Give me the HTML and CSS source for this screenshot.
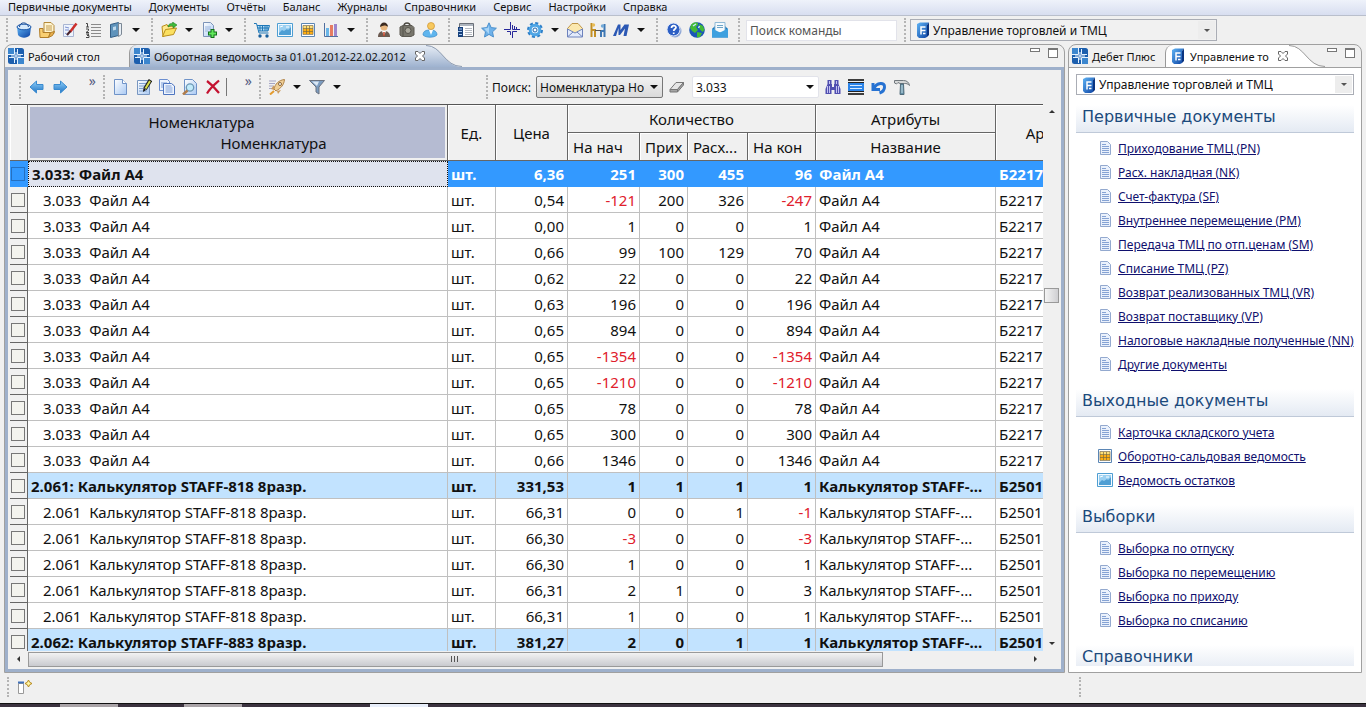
FILE: index.html
```html
<!DOCTYPE html>
<html lang="ru">
  <head>
    <meta charset="utf-8" />
    <meta name="viewport" content="width=device-width, initial-scale=1.0" />
    <title>Дебет Плюс</title>
    <link rel="stylesheet" href="styles.css" />
  </head>

  <body>
    <svg class="sprite" width="0" height="0">
      <defs>
        <linearGradient id="blue" x1="0" y1="0" x2="1" y2="1">
          <stop offset="0" stop-color="#5fb4f5" />
          <stop offset="1" stop-color="#0a3fa0" />
        </linearGradient>
        <linearGradient id="sky" x1="0" y1="0" x2="0" y2="1">
          <stop offset="0" stop-color="#8fd0fa" />
          <stop offset="1" stop-color="#1f74c4" />
        </linearGradient>
        <linearGradient id="page" x1="0" y1="0" x2="1" y2="1">
          <stop offset="0" stop-color="#ffffff" />
          <stop offset="1" stop-color="#a9c9f3" />
        </linearGradient>
        <linearGradient id="tabfill" x1="0" y1="0" x2="0" y2="1">
          <stop offset="0" stop-color="#e8eef6" />
          <stop offset="1" stop-color="#9eb2cf" />
        </linearGradient>
      </defs>
      <symbol id="i-box" viewBox="0 0 16 16">
        <path d="M1 5l1 8c3 3.500 9 3.500 12 0l1-8z" fill="url(#blue)" />
        <ellipse cx="8" cy="5" rx="7" ry="2.800" fill="#d5e8fa" stroke="#1c57a8" />
        <path d="M3.500 5c0-5.500 8-5.500 9 0" fill="none" stroke="#174a96" />
      </symbol>
      <symbol id="i-docs" viewBox="0 0 16 16">
        <path d="M5 .5h7l3 3v8H5z" fill="#fff4cf" stroke="#b58a3a" />
        <path d="M7 4h6M7 6h6M7 8h6" stroke="#c39c50" />
        <path d="M.5 6.500H4v4h7.500l-2 5H1z" fill="#f9cf72" stroke="#b07d28" />
        <path d="M11.500 10.500l4-1-2 4-4 2z" fill="#e7ae4c" stroke="#b07d28" />
      </symbol>
      <symbol id="i-pen" viewBox="0 0 16 16">
        <path d="M1.500 2.500h10v12h-10z" fill="#eef4fd" stroke="#a9b5d2" />
        <path d="M3 5l4 1M3 8h4M3 11l3 2" stroke="#7b8fd0" />
        <path d="M14.500 1.500L8 10" stroke="#cc2f2b" stroke-width="2.500" />
        <path d="M8.500 9L5 13" stroke="#48242c" stroke-width="2" />
      </symbol>
      <symbol id="i-list" viewBox="0 0 16 16">
        <path d="M6 2.500h10M6 5.500h10M6 8.500h10M6 11.500h10M6 14.500h10" stroke="#8a8a8a" />
        <path d="M1 1.500h1.500V5M1 5h3M1 7h2.500v1.500L1 10.500h3M1 12h3L2 13.500h2V15.500H1" fill="none" stroke="#444" />
      </symbol>
      <symbol id="i-book" viewBox="0 0 16 16">
        <path d="M2.500 2.500l8-2v13l-8 2z" fill="#5f93bb" stroke="#355f86" />
        <path d="M10.500 1.500h3v11l-3 2z" fill="#e7eef5" stroke="#7b8794" />
        <path d="M5 5l3-.7v3.500l-3 .7z" fill="#bed9ec" />
      </symbol>
      <symbol id="i-folder" viewBox="0 0 16 16">
        <path d="M1 4.500l5-2 1 2 6-.5v4L2 14.500z" fill="#ffe98d" stroke="#b98e1b" />
        <path d="M1.500 14.500l3-7 11-1.500-3 6.500z" fill="#fbe060" stroke="#b98e1b" />
        <path d="M7 5c0-3 3-4 5-3.500L11.500 0 16 3l-4 3V4c-2-.5-3 0-5 1z" fill="#3ebb3a" stroke="#1f8423" stroke-width=".6" />
      </symbol>
      <symbol id="i-docplus" viewBox="0 0 16 16">
        <path d="M2.500.5h7l3 3v11h-10z" fill="url(#page)" stroke="#7c93b8" />
        <path d="M4 5h6M4 7h6M4 9h3" stroke="#9db5dc" />
        <path d="M11.500 7v9M7 11.500h9" stroke="#127018" stroke-width="4" />
        <path d="M11.500 8v7M8 11.500h7" stroke="#62e85c" stroke-width="2" />
      </symbol>
      <symbol id="i-cart" viewBox="0 0 16 16">
        <path d="M3 3h12.500L14 9H4.500z" fill="#b5dcf5" />
        <path d="M0 1.500h2.500L5 11h9.500M3 3.500h12.500L14 9H4.500M6 3.500V9M8.500 3.500V9M11 3.500V9M13 3.500V9M3.500 6H15" fill="none" stroke="#1f78b8" />
        <circle cx="6" cy="14" r="1.700" fill="#185f9c" />
        <circle cx="13" cy="14" r="1.700" fill="#185f9c" />
      </symbol>
      <symbol id="i-image" viewBox="0 0 16 16">
        <path d="M.5 1.500h15v13H.5z" fill="#f3faff" stroke="#4e9ed2" />
        <path d="M2 3h12v10H2z" fill="#9bd0f1" />
        <path d="M2 11l3-3 2 1 3-2 1 1 3-3v8H2z" fill="#4f9fd4" />
        <path d="M3 5l3-1M9 5h3" stroke="#fff" />
      </symbol>
      <symbol id="i-grid" viewBox="0 0 16 16">
        <path d="M1.500 1.500h13v13h-13z" fill="#fff" stroke="#5b86b5" />
        <path d="M3 4h10v3H3z" fill="#ffe07a" />
        <path d="M3 7h10v5H3z" fill="#ffae12" />
        <path d="M3 3.500h10v9H3zM6.500 4v8M9.500 4v8M3 6.500h10M3 9.500h10" fill="none" stroke="#7d6a3c" stroke-width=".7" />
      </symbol>
      <symbol id="i-chart" viewBox="0 0 16 16">
        <path d="M1.500 1v13.500H15" fill="none" stroke="#516f9e" />
        <path d="M3 6h3v8H3z" fill="#6ab6e8" />
        <path d="M7 3h3v11H7z" fill="#e67c62" />
        <path d="M11 2h3v12h-3z" fill="#9d86cc" />
      </symbol>
      <symbol id="i-man" viewBox="0 0 16 16">
        <path d="M2 15c0-5 3-6 6-6s6 1 6 6z" fill="#6b5a50" />
        <circle cx="8" cy="5" r="3.500" fill="#e8b67e" />
        <path d="M4 5c0-6 8-6 8 0-2-2-5-2-8 0z" fill="#3b2a20" />
        <path d="M6 9l2 5 2-5z" fill="#fff" />
        <path d="M8 10v4" stroke="#c23e22" stroke-width="1.500" />
      </symbol>
      <symbol id="i-case" viewBox="0 0 16 16">
        <path d="M5 4c0-4 6-4 6 0" fill="none" stroke="#4c4941" stroke-width="1.500" />
        <path d="M1 5l3-1.500h9l2 2V13l-3 1.500H3L1 13z" fill="#77756b" stroke="#5c5951" />
        <path d="M4 4v10" stroke="#55524a" />
        <circle cx="9" cy="8.500" r="3" fill="#aaa89c" stroke="#55524a" />
      </symbol>
      <symbol id="i-user" viewBox="0 0 16 16">
        <path d="M1 13c0-4 3-5 7-5s7 1 7 5c-3 3-11 3-14 0z" fill="#5fb5ee" stroke="#2b7fc0" stroke-width=".6" />
        <circle cx="9" cy="4" r="3.500" fill="#f7c95e" stroke="#cf922b" stroke-width=".7" />
        <path d="M7 8l2 5 2-5z" fill="#fff" />
      </symbol>
      <symbol id="i-form" viewBox="0 0 16 16">
        <path d="M1.500 1.500h14v13h-14z" fill="#fff" stroke="#6b7078" />
        <path d="M2 2h13v2H2z" fill="#aeb5be" />
        <path d="M7 6.500h7M7 8.500h7M7 10.500h7M7 12.500h7" stroke="#b5bac2" />
        <path d="M0 5h5v10H0z" fill="#16407c" />
        <path d="M1 7h3M0 9.500h4M1 12.500h3" stroke="#a9c9ef" />
      </symbol>
      <symbol id="i-star" viewBox="0 0 16 16">
        <path d="M8 .8l2.200 4.800 5.200.6-3.900 3.600 1 5.200L8 12.400 3.500 15l1-5.200L.6 6.200l5.200-.6z" fill="#6fb2ea" stroke="#4c90cc" />
        <path d="M8 3v9L3 6.500l4-.500z" fill="#a8d5f7" />
      </symbol>
      <symbol id="i-cross" viewBox="0 0 16 16">
        <path d="M6.500 0v7.500H0M8.500 3v4.500M8.500 7.500H16M10.500 4v3.500M6.500 9.500V13M8.500 16V9.500H13M3 9.500h3.500M12.500 5v2.500" fill="none" stroke="#28289a" />
      </symbol>
      <symbol id="i-gear" viewBox="0 0 16 16">
        <circle cx="8" cy="8" r="6.800" fill="none" stroke="#2d7fc9" stroke-width="2.400" stroke-dasharray="3 2.340" />
        <circle cx="8" cy="8" r="4.800" fill="#e8f5ff" stroke="#4ea5e5" stroke-width="3" />
        <circle cx="8" cy="8" r="2" fill="#fff" stroke="#2065ab" />
      </symbol>
      <symbol id="i-mail" viewBox="0 0 16 16">
        <path d="M.5 6.500L5 1.500h6l4.500 5v8H.5z" fill="#fbe8ae" stroke="#bf9545" />
        <path d="M.5 7l7.500 4 7.500-4v8H.5z" fill="#e3ebfb" stroke="#6d82bd" />
        <path d="M1 14.500l5-4.500M15 14.500L10 10" stroke="#6d82bd" />
      </symbol>
      <symbol id="i-doors" viewBox="0 0 16 16">
        <path d="M1.500 1v14M5 7v8M1.500 8H6" fill="none" stroke="#c28f24" stroke-width="2" />
        <circle cx="3.500" cy="3" r="1.700" fill="#e9bd57" />
        <path d="M14.500 2v13M11 8v7M10 9h4" fill="none" stroke="#3f78b4" stroke-width="2" />
        <circle cx="12.500" cy="4" r="1.700" fill="#74abd8" />
        <path d="M5 8.500h6" stroke="#555" />
      </symbol>
      <symbol id="i-m" viewBox="0 0 16 16">
        <path d="M0 14L5 2.500h2.500L7.500 8l4-5.500H16L13.500 14h-3L12 6.500 7 13H5.500V6L3 14z" fill="#2b58b4" />
      </symbol>
      <symbol id="i-help" viewBox="0 0 16 16">
        <circle cx="9" cy="9" r="6.500" fill="#8fa7d5" />
        <circle cx="7.500" cy="7.500" r="6.500" fill="#2d5fc4" stroke="#dbe6fa" />
        <path d="M5.500 6c0-3 4.500-3 4.500-.5C10 7 7.700 7 7.700 9M7.700 10.500V12" fill="none" stroke="#fff" stroke-width="1.700" />
      </symbol>
      <symbol id="i-globe" viewBox="0 0 16 16">
        <circle cx="8" cy="8" r="7.800" fill="#1c56b8" />
        <path d="M2 3c3-4 8-3 7 0L7 5l2 3-3 3-3-2-2-3zM10 2l4 2 1.500 4-2 2-3-3zM8 10l5 1-2 4-3 .5z" fill="#43bb36" />
        <path d="M4 4l3-2M9.500 6l1-2" stroke="#c5e8ff" stroke-width="1.500" />
      </symbol>
      <symbol id="i-letter" viewBox="0 0 16 16">
        <path d="M0 7l4-4h8l4 4v8.500H0z" fill="#1c78bb" />
        <path d="M3 .5h10v10H3z" fill="#f4fafd" stroke="#8fb9d6" />
        <path d="M5 3.500h6M5 5.500h6" stroke="#6fa5c8" />
        <path d="M0 6.500l8 4 8-4v9H0z" fill="#3ea0df" />
      </symbol>
      <symbol id="i-app" viewBox="0 0 16 16">
        <path d="M2 2l3-1.500h9L12 3v12l-2 1H4l-2-2z" fill="url(#blue)" />
        <path d="M12 3l2-2.500V13l-2 2z" fill="#0b3480" />
        <path d="M6 12.500V5h4.500M6 8.500h4.500M8 11.500h2.500" fill="none" stroke="#fff" stroke-width="1.500" />
      </symbol>
      <symbol id="i-logo" viewBox="0 0 16 16">
        <rect width="16" height="16" rx="2.500" fill="#1c5fae" />
        <path d="M0 0h6v6H0zM10 10h6v6h-6z" fill="#3c86ce" />
        <path d="M6.500 0v6.500H0M9.500 1v5.500H15M9.500 16V9.500H16M6.500 15V9.500H1M8 4v8M3 8h10" fill="none" stroke="#e6f3ff" />
      </symbol>
      <symbol id="i-close" viewBox="0 0 12 12">
        <path d="M1.500 1.500h2.500l2 2 2-2h2.500V4L8.500 6l2 2v2.500H8l-2-2-2 2H1.500V8l2-2-2-2z" fill="#fff" stroke="#666" />
      </symbol>
      <symbol id="i-back" viewBox="0 0 16 16">
        <path d="M1 8l6.500-6v3.500H14v5H7.500V14z" fill="url(#sky)" stroke="#3a8bd0" />
      </symbol>
      <symbol id="i-fwd" viewBox="0 0 16 16">
        <path d="M15 8L8.500 2v3.500H2v5h6.500V14z" fill="url(#sky)" stroke="#3a8bd0" />
      </symbol>
      <symbol id="i-new" viewBox="0 0 16 16">
        <path d="M1.500.5h8l4 4v11h-12z" fill="url(#page)" stroke="#6f93c8" />
        <path d="M9.500.5v4h4" fill="#fff" stroke="#6f93c8" />
      </symbol>
      <symbol id="i-edit" viewBox="0 0 16 16">
        <path d="M1.500 1.500h12v14h-12z" fill="url(#page)" stroke="#7896c0" />
        <path d="M3 4.500h7M3 7h6M3 9.500h4M3 12h8" stroke="#7fa1ce" />
        <path d="M14.500 1L9 10" stroke="#1d1d1d" stroke-width="4" />
        <path d="M14 2L9.500 9.500" stroke="#d9e04a" stroke-width="2" />
        <path d="M7.500 9l-.5 4 3-2z" fill="#111" />
      </symbol>
      <symbol id="i-copy" viewBox="0 0 16 16">
        <path d="M.5.5h8l2 2v9H.500z" fill="#eef4fd" stroke="#6c8fd0" />
        <path d="M2 4h6M2 6h3M2 8h3" stroke="#7e9fd8" />
        <path d="M4.500 4.500h8l3 2.500v8.500h-11z" fill="#eef4fd" stroke="#4f76c0" />
        <path d="M6.500 7h6M6.500 9h7M6.500 11h7M6.500 13h7" stroke="#7e9fd8" />
      </symbol>
      <symbol id="i-find" viewBox="0 0 16 16">
        <path d="M2.500.5h8l4 4v11h-12z" fill="url(#page)" stroke="#6f93c8" />
        <circle cx="8" cy="8.500" r="3.700" fill="#c2ebfa" stroke="#6d98b5" stroke-width="1.300" />
        <path d="M5.500 11.500L1 15.500" stroke="#b07d4b" stroke-width="2.500" />
      </symbol>
      <symbol id="i-del" viewBox="0 0 16 16">
        <path d="M2 2c4 3 8 7 12 12M14 1.500C10 5 5 9 2 14.500" fill="none" stroke="#c41230" stroke-width="2.200" />
      </symbol>
      <symbol id="i-rocket" viewBox="0 0 16 16">
        <path d="M0 2h7M0 4.500h6M0 7h4M0 9.500h3" stroke="#a5a5c5" />
        <path d="M5 10c1-5 5-9 10.500-9.500C15 6 12 9 7 12z" fill="#f0cf97" stroke="#b08348" />
        <path d="M5 6L2 10l3 1zM8 12l1 3 3-4z" fill="#cc9a5a" />
        <circle cx="11" cy="5" r="1.500" fill="#fff" stroke="#8a673d" />
        <path d="M5 12l-4 3.500" stroke="#e49b2e" stroke-width="2" />
      </symbol>
      <symbol id="i-filter" viewBox="0 0 16 16">
        <path d="M.5 1.500h15L10 8v7l-3-2V8z" fill="#7b9cc0" stroke="#6b7280" />
        <path d="M3 2.500h7L8 7z" fill="#dbe8f5" />
      </symbol>
      <symbol id="i-eraser" viewBox="0 0 16 16">
        <path d="M1 10.500l6-7h7.500l-6 7z" fill="#e6e6e6" stroke="#777" />
        <path d="M1 10.500V13h7.500v-2.500zM8.500 13l6-7V3.500l-6 7z" fill="#a5a5a5" stroke="#777" />
      </symbol>
      <symbol id="i-binoc" viewBox="0 0 16 16">
        <path d="M2.500 5V1h4v4H7v3h2V5h.5V1h4v4l2 5v5h-6v-4h-3v4h-6v-5z" fill="#514fb0" />
        <path d="M2.500 7v7M4.500 7v7M11.500 7v7M13.500 7v7M4.500 2v3M11.500 2v3" stroke="#c3c3f2" />
      </symbol>
      <symbol id="i-lines" viewBox="0 0 16 16">
        <path d="M0 4h16v8H0z" fill="#2c84e8" />
        <path d="M0 1h16M0 15h16" stroke="#000" stroke-width="1.500" />
        <path d="M0 3.500h16M0 12.500h16" stroke="#222" />
        <path d="M2 6.500h12M2 9.500h12" stroke="#d8ebff" />
      </symbol>
      <symbol id="i-undo" viewBox="0 0 16 16">
        <path d="M2 4v6.500h7M2.500 10C6 3 14 3 13.500 8c0 3-2 5-5 6" fill="none" stroke="#2672d2" stroke-width="3" />
      </symbol>
      <symbol id="i-hammer" viewBox="0 0 16 16">
        <path d="M.5 4V1.500h9c3.500 0 5.500 2 6 5-2-2-3-2-5-2H6L4 3.500 2.500 5z" fill="#d6d8d8" stroke="#70777c" />
        <path d="M6.500 5h3l.5 10.500H6z" fill="#628fa6" stroke="#506c7b" />
        <path d="M8 6v8" stroke="#c7e0ea" />
      </symbol>
      <symbol id="i-doc" viewBox="0 0 16 16">
        <path d="M3.500 1.500h7l3 3v10h-10z" fill="#eaf1fc" stroke="#93a9cf" />
        <path d="M5 4.500h4M5 6.500h7M5 8.500h7M5 10.500h7M5 12.500h7" stroke="#86a3d4" />
      </symbol>
      <symbol id="i-newwin" viewBox="0 0 16 16">
        <path d="M.5 3.500h5v10h-5z" fill="#fff" stroke="#999" />
        <path d="M0 2.500h6" stroke="#3f70ba" stroke-width="2" />
        <path d="M10.500 0l1.200 2.300L14 3.500l-2.300 1.200L10.500 7 9.300 4.700 7 3.500l2.300-1.200z" fill="#fff6a5" stroke="#b68a1e" />
      </symbol>
    </svg>

    <nav class="menubar">
      <button>Первичные документы</button>
      <button>Документы</button>
      <button>Отчёты</button>
      <button>Баланс</button>
      <button>Журналы</button>
      <button>Справочники</button>
      <button>Сервис</button>
      <button>Настройки</button>
      <button>Справка</button>
    </nav>

    <header class="toolbar">
      <div class="group" data-icons="box docs pen list book |"></div>
      <div class="group" data-icons="folder | docplus |"></div>
      <div class="group" data-icons="cart image grid chart |"></div>
      <div class="group" data-icons="man case user"></div>
      <div class="group" data-icons="form star cross gear | mail doors m |"></div>
      <div class="group" data-icons="help globe letter"></div>
      <div class="group">
        <input class="command" type="text" placeholder="Поиск команды" aria-label="Поиск команды" />
      </div>
      <div class="group">
        <div class="combo combo-top">
          <svg class="icon"><use href="#i-app" /></svg>
          <select aria-label="Раздел">
            <option>Управление торговлей и ТМЦ</option>
          </select>
          <span class="combo-arrow"></span>
        </div>
      </div>
    </header>

    <main>
      <section class="editor">
        <div class="tabs">
          <button class="tab">
            <svg class="icon"><use href="#i-logo" /></svg>
            Рабочий стол
          </button>
          <button class="tab active">
            <svg class="icon"><use href="#i-logo" /></svg>
            Оборотная ведомость за 01.01.2012-22.02.2012
            <svg class="close"><use href="#i-close" /></svg>
          </button>
          <svg class="tail" viewBox="0 0 36 22">
            <path d="M0 0C16 0 18 22 36 22H0z" fill="url(#tabfill)" />
            <path d="M0 .5C16 .5 18 21.500 36 21.500" fill="none" stroke="#8d9bb0" />
          </svg>
          <span class="winbtns"><button class="min" aria-label="Свернуть"></button><button class="max" aria-label="Развернуть"></button></span>
        </div>
        <div class="editor-body">
          <div class="subbar">
            <div class="group" data-icons="back fwd"><span class="more">»</span></div>
            <div class="group" data-icons="new edit copy find del"><span class="sep"></span><span class="more">»</span></div>
            <div class="group" data-icons="rocket | filter |"></div>
            <div class="group search">
              <label for="field">Поиск:</label>
              <div class="field">
                <select id="field">
                  <option>Номенклатура Номенклатура</option>
                </select>
                <span class="arrow"></span>
              </div>
              <button class="tool" aria-label="Очистить"><svg class="icon"><use href="#i-eraser" /></svg></button>
              <div class="field value">
                <input type="text" value="3.033" aria-label="Значение" />
                <span class="arrow"></span>
              </div>
              <button class="tool" aria-label="Найти"><svg class="icon"><use href="#i-binoc" /></svg></button>
              <button class="tool" aria-label="Строки"><svg class="icon"><use href="#i-lines" /></svg></button>
              <button class="tool" aria-label="Отменить"><svg class="icon"><use href="#i-undo" /></svg></button>
              <button class="tool" aria-label="Настроить"><svg class="icon"><use href="#i-hammer" /></svg></button>
            </div>
          </div>

          <div class="grid">
            <div class="viewport">
              <table>
                <colgroup>
                  <col class="c-mark" />
                  <col class="c-name" />
                  <col class="c-unit" />
                  <col class="c-price" />
                  <col class="c-price" />
                  <col class="c-unit" />
                  <col class="c-out" />
                  <col class="c-end" />
                  <col class="c-title" />
                  <col class="c-art" />
                </colgroup>
                <thead>
                  <tr>
                    <th rowspan="2"></th>
                    <th rowspan="2" class="sorted"><span>Номенклатура</span><span>Номенклатура</span></th>
                    <th rowspan="2">Ед.</th>
                    <th rowspan="2">Цена</th>
                    <th colspan="4">Количество</th>
                    <th>Атрибуты</th>
                    <th rowspan="2">Артикул</th>
                  </tr>
                  <tr>
                    <th class="left">На нач</th>
                    <th class="left">Прих</th>
                    <th class="left">Расх...</th>
                    <th class="left">На кон</th>
                    <th>Название</th>
                  </tr>
                </thead>
                <tbody></tbody>
              </table>
            </div>
            <div class="vscroll"><i class="up"></i><i class="thumb"></i><i class="down"></i></div>
          </div>
          <div class="hscroll"><i class="prev"></i><i class="thumb"></i><i class="next"></i></div>
        </div>
      </section>

      <aside class="side">
        <div class="tabs">
          <button class="tab">
            <svg class="icon"><use href="#i-logo" /></svg>
            Дебет Плюс
          </button>
          <button class="tab active">
            <svg class="icon"><use href="#i-app" /></svg>
            Управление то
            <svg class="close"><use href="#i-close" /></svg>
          </button>
          <svg class="tail" viewBox="0 0 36 22">
            <path d="M0 0C16 0 18 22 36 22H0z" fill="#fff" />
            <path d="M0 .5C16 .5 18 21.500 36 21.500" fill="none" stroke="#999" />
          </svg>
          <span class="winbtns"><button class="min" aria-label="Свернуть"></button><button class="max" aria-label="Развернуть"></button></span>
        </div>
        <div class="side-body">
          <div class="combo">
            <svg class="icon"><use href="#i-app" /></svg>
            <select aria-label="Раздел панели">
              <option>Управление торговлей и ТМЦ</option>
            </select>
            <span class="combo-arrow"></span>
          </div>
          <h2>Первичные документы</h2>
          <ul>
            <li><svg class="icon"><use href="#i-doc" /></svg><a href="#">Приходование ТМЦ (PN)</a></li>
            <li><svg class="icon"><use href="#i-doc" /></svg><a href="#">Расх. накладная (NK)</a></li>
            <li><svg class="icon"><use href="#i-doc" /></svg><a href="#">Счет-фактура (SF)</a></li>
            <li><svg class="icon"><use href="#i-doc" /></svg><a href="#">Внутреннее перемещение (PM)</a></li>
            <li><svg class="icon"><use href="#i-doc" /></svg><a href="#">Передача ТМЦ по отп.ценам (SM)</a></li>
            <li><svg class="icon"><use href="#i-doc" /></svg><a href="#">Списание ТМЦ (PZ)</a></li>
            <li><svg class="icon"><use href="#i-doc" /></svg><a href="#">Возврат реализованных ТМЦ (VR)</a></li>
            <li><svg class="icon"><use href="#i-doc" /></svg><a href="#">Возврат поставщику (VP)</a></li>
            <li><svg class="icon"><use href="#i-doc" /></svg><a href="#">Налоговые накладные полученные (NN)</a></li>
            <li><svg class="icon"><use href="#i-doc" /></svg><a href="#">Другие документы</a></li>
          </ul>
          <h2>Выходные документы</h2>
          <ul>
            <li><svg class="icon"><use href="#i-doc" /></svg><a href="#">Карточка складского учета</a></li>
            <li><svg class="icon"><use href="#i-grid" /></svg><a href="#">Оборотно-сальдовая ведомость</a></li>
            <li><svg class="icon"><use href="#i-image" /></svg><a href="#">Ведомость остатков</a></li>
          </ul>
          <h2>Выборки</h2>
          <ul>
            <li><svg class="icon"><use href="#i-doc" /></svg><a href="#">Выборка по отпуску</a></li>
            <li><svg class="icon"><use href="#i-doc" /></svg><a href="#">Выборка по перемещению</a></li>
            <li><svg class="icon"><use href="#i-doc" /></svg><a href="#">Выборка по приходу</a></li>
            <li><svg class="icon"><use href="#i-doc" /></svg><a href="#">Выборка по списанию</a></li>
          </ul>
          <h2>Справочники</h2>
        </div>
      </aside>
    </main>

    <footer class="status">
      <div class="status-left"><button class="tool" aria-label="Новое окно"><svg class="icon"><use href="#i-newwin" /></svg></button></div>
      <div class="status-right"></div>
    </footer>
    <div class="taskbar"><i></i><i></i><i class="current"></i></div>

    <script>
      const file = "Файл A4";
      const calc = "Калькулятор STAFF-818 8разр.";
      const calcShort = "Калькулятор STAFF-...";

      // тип, наименование, цена, на нач, приход, расход, на кон, название, артикул
      const rows = [
        ["group current", "3.033: " + file, "6,36", "251", "300", "455", "96", file, "Б2217"],
        ["", "3.033  " + file, "0,54", "-121", "200", "326", "-247", file, "Б2217"],
        ["", "3.033  " + file, "0,00", "1", "0", "0", "1", file, "Б2217"],
        ["", "3.033  " + file, "0,66", "99", "100", "129", "70", file, "Б2217"],
        ["", "3.033  " + file, "0,62", "22", "0", "0", "22", file, "Б2217"],
        ["", "3.033  " + file, "0,63", "196", "0", "0", "196", file, "Б2217"],
        ["", "3.033  " + file, "0,65", "894", "0", "0", "894", file, "Б2217"],
        ["", "3.033  " + file, "0,65", "-1354", "0", "0", "-1354", file, "Б2217"],
        ["", "3.033  " + file, "0,65", "-1210", "0", "0", "-1210", file, "Б2217"],
        ["", "3.033  " + file, "0,65", "78", "0", "0", "78", file, "Б2217"],
        ["", "3.033  " + file, "0,65", "300", "0", "0", "300", file, "Б2217"],
        ["", "3.033  " + file, "0,66", "1346", "0", "0", "1346", file, "Б2217"],
        ["group", "2.061: " + calc, "331,53", "1", "1", "1", "1", calcShort, "Б2501"],
        ["", "2.061  " + calc, "66,31", "0", "0", "1", "-1", calcShort, "Б2501"],
        ["", "2.061  " + calc, "66,30", "-3", "0", "0", "-3", calcShort, "Б2501"],
        ["", "2.061  " + calc, "66,30", "1", "0", "0", "1", calcShort, "Б2501"],
        ["", "2.061  " + calc, "66,31", "2", "1", "0", "3", calcShort, "Б2501"],
        ["", "2.061  " + calc, "66,31", "1", "0", "0", "1", calcShort, "Б2501"],
        ["group", "2.062: Калькулятор STAFF-883 8разр.", "381,27", "2", "0", "1", "1", calcShort, "Б2501"],
      ];

      const tbody = document.querySelector("tbody");
      rows.forEach(([type, name, ...rest]) => {
        const tr = document.createElement("tr");
        tr.className = type;
        tr.innerHTML = `<td class="mark"><input type="checkbox" aria-label="${name}" /></td><td class="name">${name}</td><td>шт.</td>`;
        rest.forEach((value, i) => {
          const td = document.createElement("td");
          td.textContent = value;
          if (i < 5) td.classList.add("num");
          if (value.startsWith("-")) td.classList.add("minus");
          tr.appendChild(td);
        });
        tbody.appendChild(tr);
      });

      // кнопки панелей: имя значка или | для стрелки списка
      document.querySelectorAll("[data-icons]").forEach((group) => {
        const html = group.dataset.icons
          .split(" ")
          .map((name) =>
            name == "|"
              ? `<button class="drop" aria-label="Список"><span class="arrow"></span></button>`
              : `<button class="tool" aria-label="${name}"><svg class="icon"><use href="#i-${name}" /></svg></button>`
          )
          .join("");
        group.insertAdjacentHTML("afterbegin", html);
      });
    </script>
  </body>
</html>
```
FILE: styles.css
```css
* {
  box-sizing: border-box;
}

body {
  margin: 0;
  height: 100vh;
  display: flex;
  flex-direction: column;
  overflow: hidden;
  background: #f0f0f0;
  color: #111;
  font-family: "Noto Sans", "Open Sans", sans-serif;
  font-size: 12px;
}

button,
input,
select {
  font: inherit;
  color: inherit;
  margin: 0;
  padding: 0;
  border: 0;
  background: none;
}

select {
  appearance: none;
  flex: 1;
  min-width: 0;
  outline: 0;
}

.sprite {
  position: absolute;
}

.icon {
  width: 16px;
  height: 16px;
  flex: none;
  display: block;
}

/* menu and toolbars */

.menubar {
  display: flex;
  gap: 17px;
  height: 16px;
  padding: 0 8px;
  background: linear-gradient(#eef2fa, #d8def0);
  border-bottom: 1px solid #b9bfcc;
  font-size: 11px;
  line-height: 14px;
}

.menubar button {
  height: 14px;
}

.toolbar,
.subbar {
  display: flex;
  align-items: center;
  height: 28px;
  padding-left: 6px;
}

.group {
  display: flex;
  align-items: center;
  height: 24px;
  padding-left: 4px;
  margin-right: 7px;
  border-left: 2px dotted #b4b4b4;
}

.tool {
  width: 23px;
  height: 22px;
  display: flex;
  align-items: center;
  justify-content: center;
}

.drop {
  width: 17px;
  height: 22px;
  display: flex;
  align-items: center;
  justify-content: center;
}

.arrow {
  border: 4px solid transparent;
  border-top-color: #111;
  border-bottom: 0;
}

.command {
  width: 151px;
  height: 21px;
  margin-left: 2px;
  padding: 0 3px;
  background: #fff;
  border: 1px solid #e2e3ea;
}

.command::placeholder {
  color: #555;
  opacity: 1;
}

.combo {
  display: flex;
  align-items: center;
  height: 21px;
  padding-left: 4px;
  border: 1px solid #aaadb5;
  background: #fff;
}

.combo select {
  padding-left: 2px;
}

.combo-top {
  width: 307px;
  height: 22px;
  background: #f1f1f1;
}

.combo-arrow {
  align-self: stretch;
  width: 17px;
  margin: 1px;
  background: #ededed;
  display: flex;
  align-items: center;
  justify-content: center;
}

.combo-arrow::after {
  content: "";
  border: 3px solid transparent;
  border-top-color: #555;
  border-bottom: 0;
}

/* panels */

main {
  flex: 1;
  min-height: 0;
  display: flex;
  gap: 3px;
  padding: 0 4px;
}

.editor,
.side {
  display: flex;
  flex-direction: column;
  min-width: 0;
  border: 1px solid #a0a0a0;
  border-radius: 8px 8px 0 0;
}

.editor {
  flex: 1;
}

.side {
  width: 294px;
  flex: none;
}

.tabs {
  display: flex;
  height: 22px;
  flex: none;
}

.tab {
  display: flex;
  align-items: center;
  gap: 4px;
  padding: 0 3px;
  font-size: 11px;
  white-space: nowrap;
}

.tab.active {
  padding-left: 4px;
  border-left: 1px solid #999;
  border-radius: 8px 0 0 0;
}

.editor .tab:first-child {
  width: 124px;
}

.side .tab:first-child {
  width: 96px;
}

.editor .tab.active {
  padding-right: 0;
  background: linear-gradient(#e8eef6, #9eb2cf);
}

.side .tab.active {
  padding-right: 0;
  background: #fff;
}

.close {
  width: 12px;
  height: 12px;
  margin-left: 4px;
}

.tail {
  width: 36px;
  height: 22px;
}

.winbtns {
  display: flex;
  align-items: flex-start;
  gap: 8px;
  margin-left: auto;
  padding: 3px 6px 0 0;
}

.min {
  width: 10px;
  height: 4px;
  background: #fff;
  border: 1px solid #777;
}

.max {
  width: 10px;
  height: 10px;
  background: #fff;
  border: 1px solid #777;
  border-top-width: 2px;
}

.editor-body {
  flex: 1;
  min-height: 0;
  display: flex;
  flex-direction: column;
  padding: 0 1px 2px 2px;
  border: 3px solid #9eb0cb;
  background: #f0f0f0;
}

.subbar {
  height: 34px;
  flex: none;
  padding-left: 9px;
}

.more {
  width: 25px;
  height: 24px;
  line-height: 12px;
  font-size: 14px;
  text-align: right;
  color: #555a80;
}

.sep {
  width: 1px;
  height: 18px;
  margin-left: 2px;
  background: #777;
}

.search {
  margin-left: 134px;
}

.search label {
  width: 44px;
}

.field {
  display: flex;
  align-items: center;
  width: 127px;
  height: 22px;
  margin-right: 2px;
  padding: 0 4px 0 3px;
  border: 1px solid #777;
  border-radius: 2px;
  background: linear-gradient(#f2f2f2, #dadada);
}

.field select {
  margin-right: 6px;
}

.value {
  margin: 0 2px 0 4px;
  border-color: #e2e3ea;
  background: #fff;
}

.value input {
  flex: 1;
  min-width: 0;
  outline: 0;
}

/* data grid */

.grid {
  flex: 1;
  min-height: 0;
  display: flex;
}

.viewport {
  flex: 1;
  min-width: 0;
  overflow: hidden;
  background: #fff;
}

table {
  width: 1100px;
  table-layout: fixed;
  border-collapse: separate;
  border-spacing: 0;
  border-top: 1px solid #555;
  font-size: 15px;
}

.c-mark { width: 18px; }
.c-name { width: 420px; }
.c-unit { width: 48px; }
.c-price { width: 72px; }
.c-out { width: 60px; }
.c-end { width: 68px; }
.c-title { width: 180px; }

th {
  height: 28px;
  padding: 0;
  font-weight: normal;
  background: #f0f0f0;
  border-right: 1px solid #666;
  border-bottom: 1px solid #666;
  box-shadow: inset 1px 1px #fff;
}

th.left {
  padding-left: 5px;
  text-align: left;
}

th:last-child[rowspan] {
  padding-left: 5px;
}

.sorted {
  background: #b5bbd2;
  box-shadow: inset 0 0 0 2px #f0f0f0;
}

.sorted span {
  display: block;
  line-height: 21px;
}

.sorted span:first-child {
  padding-right: 72px;
}

.sorted span:last-child {
  padding-left: 72px;
}

td {
  height: 26px;
  padding: 0 3px;
  line-height: 20px;
  white-space: pre;
  overflow: hidden;
  border-right: 1px solid #c0c0c0;
  border-bottom: 1px solid #c0c0c0;
}

.num {
  text-align: right;
}

.minus {
  color: #e0202c;
}

.name {
  padding-left: 15px;
}

td.mark {
  padding: 0 1px;
  background: #f0f0f0;
  border-color: #666;
}

.mark input {
  appearance: none;
  display: block;
  width: 14px;
  height: 14px;
  background: #f3f3ee;
  border: 1px solid #777;
}

tr.group {
  display: table-row;
  font-weight: bold;
}

.group td {
  background: #c2e3ff;
}

.group .name {
  padding-left: 3px;
}

.current td {
  color: #fff;
  background: #3399ff;
  border-color: #3399ff;
}

.current .name {
  color: #111;
  background: #dfe3ee;
  border: 1px dotted #111;
}

.group .mark {
  background: #f0f0f0;
}

.current .mark {
  background: #3399ff;
}

.current .mark input {
  background: #3399ff;
  border-color: #2670c0;
}

.vscroll {
  width: 17px;
  display: flex;
  flex-direction: column;
  align-items: center;
}

.up,
.down {
  border: 3px solid transparent;
}

.up {
  margin-top: 6px;
  border-bottom-color: #333;
  border-top: 0;
}

.down {
  margin: auto 0 6px;
  border-top-color: #333;
  border-bottom: 0;
}

.vscroll .thumb {
  width: 15px;
  height: 15px;
  margin-top: 175px;
  border: 1px solid #999;
  background: linear-gradient(90deg, #f4f4f4, #cfcfd2);
}

.hscroll {
  display: flex;
  align-items: center;
  height: 16px;
  flex: none;
  padding-right: 20px;
}

.prev,
.next {
  border: 3px solid transparent;
}

.prev {
  margin: 0 8px 0 4px;
  border-right-color: #333;
}

.next {
  margin-left: auto;
  border-left-color: #333;
}

.hscroll .thumb {
  width: 83%;
  height: 15px;
  border: 1px solid #999;
  background: repeating-linear-gradient(90deg, #555 0 1px, transparent 1px 3px) center / 8px 6px no-repeat, linear-gradient(#f2f2f2, #c9cacf);
}

/* side panel */

.side-body {
  flex: 1;
  min-height: 0;
  overflow: hidden;
  padding: 6px 7px 0;
  background: #fff;
  border-top: 1px solid #a0a0a0;
  border-bottom: 6px solid #fff;
}

.side .combo {
  margin-bottom: 10px;
}

h2 {
  height: 28px;
  margin: 0;
  padding-left: 6px;
  font: 16px/24px "DejaVu Sans", sans-serif;
  color: #1c4a7c;
  background: linear-gradient(#fff, #e4eaf3);
  border-bottom: 1px solid #bfc9d8;
}

ul {
  list-style: none;
  margin: 0;
  padding: 3px 0 13px 21px;
}

li {
  display: flex;
  align-items: center;
  gap: 5px;
  height: 24px;
  white-space: nowrap;
}

a {
  color: #10106e;
}

/* bottom of the window */

.status {
  display: flex;
  height: 30px;
  flex: none;
  padding: 4px 0 6px 7px;
}

.status-left,
.status-right {
  border-left: 2px dotted #b4b4b4;
}

.status-left {
  flex: 1;
  padding-left: 5px;
}

.status-right {
  width: 287px;
}

.taskbar {
  display: flex;
  gap: 66px;
  height: 4px;
  flex: none;
  padding-left: 60px;
  background: #3c3340;
  border-top: 1px solid #111;
}

.taskbar i {
  width: 58px;
  background: #aaa4a8;
}

.taskbar .current {
  margin-left: 62px;
  background: #e8eefa;
}
```
